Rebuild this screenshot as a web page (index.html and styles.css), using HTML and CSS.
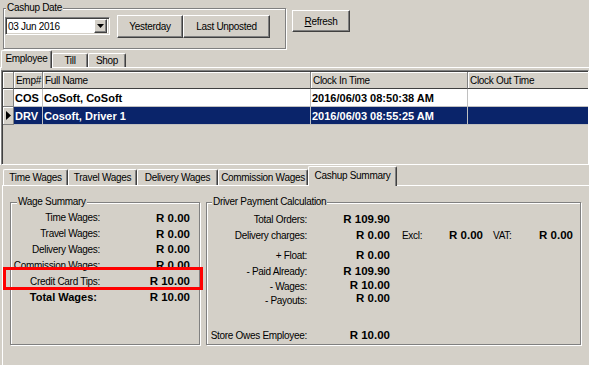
FILE: index.html
```html
<!DOCTYPE html>
<html lang="en">
<head>
  <meta charset="UTF-8" />
  <title>Cashup</title>
  <link rel="stylesheet" href="styles.css">
</head>
<body>
  <div class="top">
    <fieldset class="group cashup">
      <legend>Cashup Date</legend>
      <div class="combo">
        <span class="combo-text">03 Jun 2016</span>
        <span class="drop">
          <svg width="7" height="4" viewBox="0 0 7 4"><path d="M0 0h7L3.5 4z" fill="#000"/></svg>
        </span>
      </div>
      <button class="btn yesterday">Yesterday</button>
      <button class="btn unposted">Last Unposted</button>
    </fieldset>
    <button class="btn refresh"><u>R</u>efresh</button>
  </div>

  <div class="tabs emp-tabs">
    <div class="tab on" style="width: 51px">Employee</div>
    <div class="tab" style="width: 36px">Till</div>
    <div class="tab" style="width: 38px">Shop</div>
  </div>
  <div class="panel emp-panel">
    <div class="grid">
      <table>
        <colgroup>
          <col style="width: 11px"><col style="width: 29px"><col style="width: 268px"><col style="width: 157px"><col style="width: 121px">
        </colgroup>
        <tr>
          <th class="ind"></th><th>Emp#</th><th>Full Name</th><th>Clock In Time</th><th>Clock Out Time</th>
        </tr>
        <tr>
          <td class="ind"></td><td>COS</td><td>CoSoft, CoSoft</td><td>2016/06/03 08:50:38 AM</td><td></td>
        </tr>
        <tr class="sel">
          <td class="ind">
            <svg width="5" height="9" viewBox="0 0 5 9"><path d="M0 0l5 4.5L0 9z" fill="#000"/></svg>
          </td><td>DRV</td><td>Cosoft, Driver 1</td><td>2016/06/03 08:55:25 AM</td><td></td>
        </tr>
      </table>
    </div>
  </div>

  <div class="tabs wage-tabs">
    <div class="tab" style="width: 65px">Time Wages</div>
    <div class="tab" style="width: 69px">Travel Wages</div>
    <div class="tab" style="width: 81px">Delivery Wages</div>
    <div class="tab" style="width: 90px">Commission Wages</div>
    <div class="tab on" style="width: 89px">Cashup Summary</div>
  </div>
  <div class="panel summary">
    <fieldset class="group wages">
      <legend>Wage Summary</legend>
      <div class="wage-rows">
        <span class="lbl">Time Wages:</span><span class="val">R 0.00</span>
        <span class="lbl">Travel Wages:</span><span class="val">R 0.00</span>
        <span class="lbl">Delivery Wages:</span><span class="val">R 0.00</span>
        <span class="lbl">Commission Wages:</span><span class="val">R 0.00</span>
        <span class="lbl">Credit Card Tips:</span><span class="val">R 10.00</span>
        <span class="lbl total">Total Wages:</span><span class="val">R 10.00</span>
      </div>
    </fieldset>

    <fieldset class="group driver">
      <legend>Driver Payment Calculation</legend>
      <div class="row r1"><span class="lbl">Total Orders:</span><span class="val">R 109.90</span></div>
      <div class="row r2">
        <span class="lbl">Delivery charges:</span><span class="val">R 0.00</span>
        <span class="xl">Excl:</span><span class="xv">R 0.00</span>
        <span class="vl">VAT:</span><span class="vv">R 0.00</span>
      </div>
      <div class="row r3"><span class="lbl">+ Float:</span><span class="val">R 0.00</span></div>
      <div class="row r4"><span class="lbl">- Paid Already:</span><span class="val">R 109.90</span></div>
      <div class="row r5"><span class="lbl">- Wages:</span><span class="val">R 10.00</span></div>
      <div class="row r6"><span class="lbl">- Payouts:</span><span class="val">R 0.00</span></div>
      <div class="row r7"><span class="lbl">Store Owes Employee:</span><span class="val">R 10.00</span></div>
    </fieldset>
  </div>

  <div class="highlight"></div>
</body>
</html>
```

FILE: styles.css
```css
* {
  margin: 0;
  padding: 0;
  box-sizing: border-box;
}

body {
  background: #d4d0c8;
  font-family: "Liberation Sans", Arial, sans-serif;
  font-size: 10px;
  letter-spacing: -0.3px;
  color: #000;
  width: 589px;
  height: 365px;
  overflow: hidden;
  position: relative;
}

/* top bar */
.top {
  display: flex;
  align-items: flex-start;
  height: 50px;
}

.group {
  border: 1px solid #808080;
  box-shadow: 1px 1px 0 #fff, inset 1px 1px 0 #fff;
  min-width: 0;
}

.group legend {
  padding: 0 1px;
  line-height: 12px;
  background: #d4d0c8;
}

.cashup {
  margin: 2px 0 0 3px;
  width: 283px;
  height: 47px;
  display: flex;
  align-items: flex-start;
  padding-left: 1px;
}

.cashup legend { margin-left: 1px; }

.combo {
  margin-top: 3px;
  width: 105px;
  height: 18px;
  background: #fff;
  border: 1px solid;
  border-color: #808080 #fff #fff #808080;
  box-shadow: inset 1px 1px 0 #404040, inset -1px -1px 0 #d4d0c8;
  display: flex;
  align-items: center;
  padding: 2px;
}

.combo-text {
  flex: 1;
  padding-left: 0;
}

.drop {
  width: 13px;
  height: 14px;
  background: #d4d0c8;
  border: 1px solid;
  border-color: #fff #404040 #404040 #fff;
  box-shadow: inset -1px -1px 0 #808080;
  display: flex;
  align-items: center;
  justify-content: center;
}

.btn {
  font-family: inherit;
  font-size: 10px;
  letter-spacing: -0.3px;
  color: #000;
  background: #d4d0c8;
  border: 1px solid;
  border-color: #fff #404040 #404040 #fff;
  box-shadow: inset -1px -1px 0 #808080;
  height: 23px;
}

.yesterday { margin: 1px 0 0 7px; width: 66px; }
.unposted { margin-top: 1px; width: 87px; }
.refresh { margin: 10px 0 0 6px; width: 58px; height: 22px; }

/* tabs */
.tabs {
  display: flex;
  align-items: flex-end;
}

.tab {
  height: 14px;
  line-height: 13px;
  text-align: center;
  white-space: nowrap;
  border: 1px solid;
  border-color: #fff #404040 transparent #fff;
  border-bottom: none;
  border-radius: 2px 2px 0 0;
  box-shadow: inset -1px 0 0 #808080;
}

.tab.on {
  height: 18px;
  line-height: 16px;
  margin-bottom: -1px;
  position: relative;
  z-index: 1;
  background: #d4d0c8;
}

.emp-tabs {
  height: 17px;
  padding-left: 1px;
}

.wage-tabs {
  height: 20px;
  padding-left: 3px;
}

.wage-tabs .tab { height: 16px; line-height: 15px; }
.wage-tabs .tab.on { height: 20px; line-height: 18px; }

.panel {
  border-top: 1px solid #fff;
  border-left: 1px solid #fff;
}

.emp-panel { height: 98px; }

/* employee grid */
.grid {
  margin-top: 2px;
  height: 95px;
  border: 1px solid;
  border-color: #808080 #fff #fff #808080;
  box-shadow: inset 1px 1px 0 #404040, inset -1px -1px 0 #d4d0c8;
  padding: 1px 0 1px 1px;
  overflow: hidden;
}

.grid table {
  border-spacing: 0;
  table-layout: fixed;
  width: 586px;
}

.grid th {
  height: 17px;
  background: #d4d0c8;
  border-right: 1px solid #808080;
  border-bottom: 1px solid #404040;
  box-shadow: inset 1px 1px 0 #fff;
  font-weight: normal;
  text-align: left;
  padding: 0 2px;
  white-space: nowrap;
  overflow: hidden;
}

.grid td {
  height: 18px;
  background: #fff;
  border-right: 1px solid #c0c0c0;
  border-bottom: 1px solid #c0c0c0;
  font-size: 11px;
  font-weight: bold;
  letter-spacing: 0;
  padding: 0 2px 0 1px;
  white-space: nowrap;
  overflow: hidden;
}

.grid .sel td {
  background: #0a246a;
  color: #fff;
}

.grid td.ind,
.grid .sel td.ind {
  background: #d4d0c8;
  border-right: 1px solid #808080;
  border-bottom: 1px solid #808080;
  box-shadow: inset 1px 1px 0 #fff;
  padding: 0;
  text-align: center;
}

.ind svg { display: block; margin: 0 auto; }

/* cashup summary */
.summary {
  margin-left: 2px;
  height: 180px;
  display: flex;
  align-items: flex-start;
  gap: 6px;
  padding: 10px 0 0 7px;
}

.wages {
  width: 190px;
  height: 149px;
  padding-top: 2px;
}

.wages legend { margin-left: 6px; }

.wage-rows {
  display: grid;
  grid-template-columns: 89px 90px;
  grid-auto-rows: 15.8px;
  align-items: center;
}

.lbl {
  text-align: right;
  white-space: nowrap;
}

.val {
  text-align: right;
  font-size: 11.5px;
  font-weight: bold;
  letter-spacing: 0;
  white-space: nowrap;
}

.lbl.total {
  font-size: 11px;
  font-weight: bold;
  letter-spacing: 0;
  padding-right: 3px;
}

.driver {
  width: 375px;
  height: 149px;
  padding-top: 3px;
}

.driver legend { margin-left: 5px; }

.row {
  display: flex;
  align-items: center;
  height: 16px;
}

.row .lbl { width: 100px; }
.row .val { width: 83px; }

.xl { margin-left: 12px; width: 40px; }
.xv { width: 41px; text-align: right; font-size: 11.5px; font-weight: bold; letter-spacing: 0; }
.vl { margin-left: 10px; width: 30px; }
.vv { width: 50px; text-align: right; font-size: 11.5px; font-weight: bold; letter-spacing: 0; }

.r3 { margin-top: 4px; }
.r5 { height: 15px; }
.r5 .val { margin-bottom: 3px; }
.r6 { height: 13px; }
.r6 .val { margin-bottom: 5px; }
.r7 { margin-top: 20px; }

/* red annotation box drawn over the screenshot */
.highlight {
  position: absolute;
  left: 3px;
  top: 267px;
  width: 200px;
  height: 23px;
  border: 3px solid #f00;
}
```
